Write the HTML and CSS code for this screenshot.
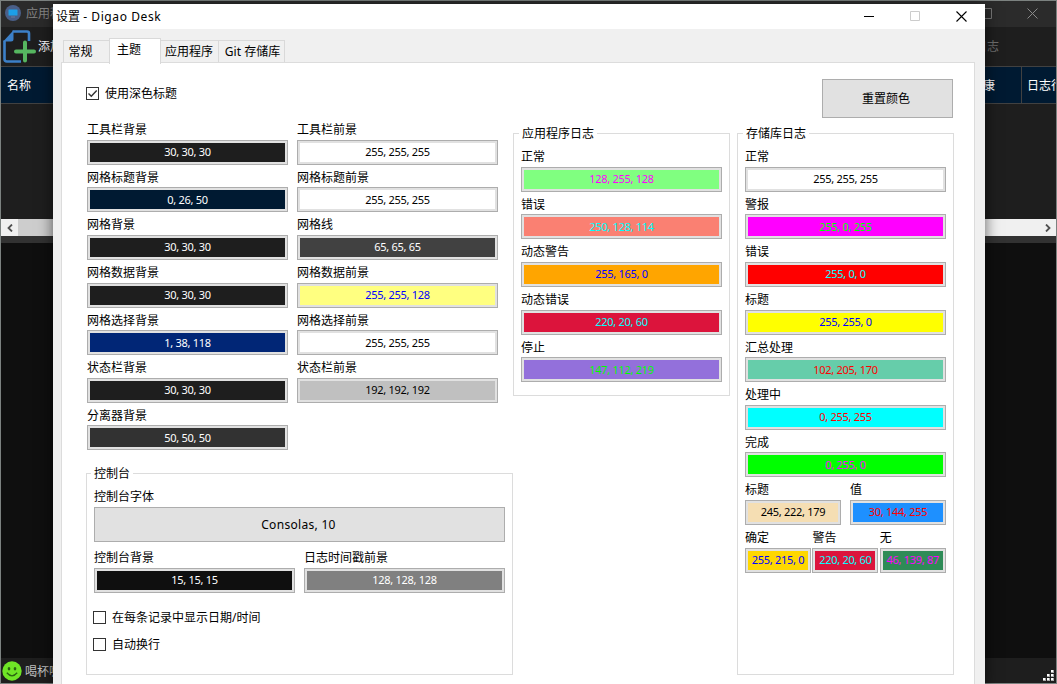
FILE: index.html
```html
<!DOCTYPE html>
<html lang="zh-CN">
<head>
    <meta charset="UTF-8">
    <title>设置 - Digao Desk</title>
    <link rel="stylesheet" href="styles.css">
</head>
<body>
    <div class="main-window">
        <div class="main-title">
            <svg class="app-icon" width="16" height="16" viewBox="0 0 16 16">
                <circle cx="8" cy="8" r="8" fill="#4a5f88"/>
                <rect x="3.5" y="4.5" width="9" height="6" rx=".5" fill="#1c9fe8"/>
                <path d="M6 12h4" stroke="#6a7f9f"/>
            </svg>
            <span>应用程序</span>
            <div class="main-controls">
                <svg width="11" height="11"><path d="M.5.5h10v10H.5z" fill="none" stroke="#777"/></svg>
                <svg width="11" height="11"><path d="M.5.5l10 10M10.500.5l-10 10" fill="none" stroke="#8a8a8a"/></svg>
            </div>
        </div>
        <div class="toolbar">
            <svg width="33" height="33" viewBox="0 0 33 33">
                <path d="M9.500 1.500H24a2 2 0 0 1 2 2V11M1.500 10.500V29a2.500 2.500 0 0 0 2.500 2.500h14" fill="none" stroke="#3c80c8" stroke-width="2.600"/>
                <path d="M.2 11.500L10.500.2V9q0 2.500-2.500 2.500z" fill="#3c80c8"/>
                <path d="M22 12.500v18M13 21.500h18" stroke="#56b660" stroke-width="4" stroke-linecap="round"/>
            </svg>
            <span class="tool-add">添加</span>
            <span class="tool-log">日志</span>
        </div>
        <div class="grid-header">
            <div class="cell cell-name">名称</div>
            <div class="cell cell-health">健康</div>
            <div class="cell cell-log">日志行</div>
        </div>
        <div class="grid-body"></div>
        <div class="scrollbar">
            <div class="arrow"><svg width="6" height="8"><path d="M5 .5L1.500 4L5 7.500" fill="none" stroke="#505050" stroke-width="1.800"/></svg></div>
            <div class="thumb"></div>
            <div class="arrow"><svg width="6" height="8"><path d="M1 .5L4.500 4L1 7.500" fill="none" stroke="#505050" stroke-width="1.800"/></svg></div>
        </div>
        <div class="splitter"></div>
        <div class="console"></div>
        <div class="statusbar">
            <svg width="20" height="20" viewBox="0 0 20 20">
                <circle cx="10" cy="10" r="9.700" fill="#6fe526"/>
                <ellipse cx="7" cy="7.800" rx="1.300" ry="1.700" fill="#2a6412"/>
                <ellipse cx="13" cy="7.800" rx="1.300" ry="1.700" fill="#2a6412"/>
                <path d="M4.800 11.800q5.200 6 10.400 0" fill="none" stroke="#2a6412" stroke-width="1.300"/>
            </svg>
            <span>喝杯咖啡</span>
            <svg class="grip" width="11" height="11">
                <path d="M8 0h3v3H8zM8 4h3v3H8zM4 4h3v3H4zM8 8h3v3H8zM4 8h3v3H4zM0 8h3v3H0z" fill="#a8a8a8"/>
                <path d="M8 0h2v2H8zM8 4h2v2H8zM4 4h2v2H4zM8 8h2v2H8zM4 8h2v2H4zM0 8h2v2H0z" fill="#fff"/>
            </svg>
        </div>
    </div>

    <div class="dialog">
        <div class="dialog-title">
            <span class="caption">设置 <span class="latin">- Digao Desk</span></span>
            <div class="dialog-controls">
                <svg width="11" height="11"><path d="M0 5.500h10" stroke="#000"/></svg>
                <svg width="11" height="11"><path d="M.5.5h9v9h-9z" fill="none" stroke="#ccc"/></svg>
                <svg width="11" height="11"><path d="M.5.5l10 10M10.500.5l-10 10" stroke="#000" stroke-width="1.100"/></svg>
            </div>
        </div>
        <div class="tabs">
            <div class="tab tab-general">常规</div>
            <div class="tab tab-theme active">主题</div>
            <div class="tab tab-apps">应用程序</div>
            <div class="tab tab-git">Git 存储库</div>
        </div>
        <div class="panel">
            <div class="left">
                <label class="check dark-title">
                    <span class="box"><svg width="11" height="11"><path d="M1.500 5.500L4.300 8.300L9.700 2.600" fill="none" stroke="#333" stroke-width="1.400"/></svg></span>
                    <span>使用深色标题</span>
                </label>
                <div class="fields two-cols">
                    <div class="field"><label>工具栏背景</label><button class="swatch toolbar-bg">30, 30, 30</button></div>
                    <div class="field"><label>工具栏前景</label><button class="swatch white">255, 255, 255</button></div>
                    <div class="field"><label>网格标题背景</label><button class="swatch header-bg">0, 26, 50</button></div>
                    <div class="field"><label>网格标题前景</label><button class="swatch white">255, 255, 255</button></div>
                    <div class="field"><label>网格背景</label><button class="swatch toolbar-bg">30, 30, 30</button></div>
                    <div class="field"><label>网格线</label><button class="swatch lines">65, 65, 65</button></div>
                    <div class="field"><label>网格数据背景</label><button class="swatch toolbar-bg">30, 30, 30</button></div>
                    <div class="field"><label>网格数据前景</label><button class="swatch data-fg">255, 255, 128</button></div>
                    <div class="field"><label>网格选择背景</label><button class="swatch select-bg">1, 38, 118</button></div>
                    <div class="field"><label>网格选择前景</label><button class="swatch white">255, 255, 255</button></div>
                    <div class="field"><label>状态栏背景</label><button class="swatch toolbar-bg">30, 30, 30</button></div>
                    <div class="field"><label>状态栏前景</label><button class="swatch silver">192, 192, 192</button></div>
                    <div class="field"><label>分离器背景</label><button class="swatch splitter-bg">50, 50, 50</button></div>
                </div>
                <fieldset class="console-group">
                    <legend>控制台</legend>
                    <div class="field font-field">
                        <label>控制台字体</label>
                        <button class="font-btn">Consolas, 10</button>
                    </div>
                    <div class="fields two-cols">
                        <div class="field"><label>控制台背景</label><button class="swatch console-bg">15, 15, 15</button></div>
                        <div class="field"><label>日志时间戳前景</label><button class="swatch gray">128, 128, 128</button></div>
                    </div>
                    <div class="checks">
                        <label class="check"><span class="box"></span>在每条记录中显示日期/时间</label>
                        <label class="check"><span class="box"></span>自动换行</label>
                    </div>
                </fieldset>
            </div>
            <div class="right">
                <button class="reset-btn">重置颜色</button>
                <div class="groups">
                    <fieldset class="app-group">
                        <legend>应用程序日志</legend>
                        <div class="field"><label>正常</label><button class="swatch app-normal">128, 255, 128</button></div>
                        <div class="field"><label>错误</label><button class="swatch salmon">250, 128, 114</button></div>
                        <div class="field"><label>动态警告</label><button class="swatch orange">255, 165, 0</button></div>
                        <div class="field"><label>动态错误</label><button class="swatch crimson">220, 20, 60</button></div>
                        <div class="field"><label>停止</label><button class="swatch purple">147, 112, 219</button></div>
                    </fieldset>
                    <fieldset class="repo-group">
                        <legend>存储库日志</legend>
                        <div class="field"><label>正常</label><button class="swatch white">255, 255, 255</button></div>
                        <div class="field"><label>警报</label><button class="swatch magenta">255, 0, 255</button></div>
                        <div class="field"><label>错误</label><button class="swatch red">255, 0, 0</button></div>
                        <div class="field"><label>标题</label><button class="swatch yellow">255, 255, 0</button></div>
                        <div class="field"><label>汇总处理</label><button class="swatch aqua">102, 205, 170</button></div>
                        <div class="field"><label>处理中</label><button class="swatch cyan">0, 255, 255</button></div>
                        <div class="field"><label>完成</label><button class="swatch lime">0, 255, 0</button></div>
                        <div class="halves">
                            <div class="field"><label>标题</label><button class="swatch wheat">245, 222, 179</button></div>
                            <div class="field"><label>值</label><button class="swatch blue">30, 144, 255</button></div>
                        </div>
                        <div class="thirds">
                            <div class="field"><label>确定</label><button class="swatch gold">255, 215, 0</button></div>
                            <div class="field"><label>警告</label><button class="swatch crimson">220, 20, 60</button></div>
                            <div class="field"><label>无</label><button class="swatch green">46, 139, 87</button></div>
                        </div>
                    </fieldset>
                </div>
            </div>
        </div>
    </div>
</body>
</html>
```

FILE: styles.css
```css
* {
    box-sizing: border-box;
}
body {
    margin: 0;
    height: 684px;
    overflow: hidden;
    font-family: "Noto Sans", "Noto Sans CJK SC", sans-serif;
    font-size: 12px;
    color: #000;
    white-space: nowrap;
}
svg {
    display: block;
    flex: none;
}
button {
    font-family: inherit;
    color: inherit;
    padding: 0;
    margin: 0;
    border-radius: 0;
}

/* main window */
.main-window {
    display: flex;
    flex-direction: column;
    height: 684px;
    border: 1px solid #7c8280;
    background: #1e1e1e;
    color: #fff;
    overflow: hidden;
}
.main-title {
    display: flex;
    align-items: center;
    height: 26px;
    padding: 0 18px 2px 4px;
    gap: 5px;
    background: #2b2b2b;
    color: #858585;
}
.main-controls {
    display: flex;
    gap: 35px;
    margin-left: auto;
}
.toolbar {
    display: flex;
    align-items: center;
    height: 39px;
    padding: 0 57px 0 2px;
}
.toolbar span {
    padding-bottom: 2px;
}
.tool-add {
    margin-left: 2px;
}
.tool-log {
    margin-left: auto;
    color: #6d6d6d;
}
.grid-header {
    display: flex;
    height: 38px;
    background: #001a32;
    border-top: 1px solid #414141;
    border-bottom: 1px solid #414141;
}
.cell {
    padding-left: 5px;
    line-height: 37px;
    border-right: 1px solid #414141;
    overflow: hidden;
}
.cell-name {
    flex: 1;
    padding-left: 6px;
}
.cell-health {
    width: 56px;
}
.cell-log {
    width: 34px;
    border-right: none;
}
.grid-body {
    height: 115px;
}
.scrollbar {
    display: flex;
    height: 17px;
    background: #f0f0f0;
}
.arrow {
    display: flex;
    align-items: center;
    justify-content: center;
    width: 17px;
}
.thumb {
    width: 880px;
    margin-right: auto;
    background: #cdcdcd;
}
.splitter {
    height: 7px;
    background: #323232;
}
.console {
    flex: 1;
    background: #0f0f0f;
}
.statusbar {
    display: flex;
    align-items: center;
    height: 25px;
    padding: 0 2px 0 1px;
    gap: 3px;
    color: #c0c0c0;
}
.grip {
    margin-left: auto;
    align-self: flex-end;
    margin-bottom: 2px;
}

/* settings dialog */
.dialog {
    position: absolute;
    left: 53px;
    top: 4px;
    width: 932px;
    height: 680px;
    display: flex;
    flex-direction: column;
    background: #f0f0f0;
    box-shadow: 0 3px 14px rgba(0, 0, 0, 0.6);
}
.dialog-title {
    display: flex;
    align-items: center;
    justify-content: space-between;
    height: 25px;
    padding: 0 18px 0 3px;
    background: #fff;
}
.caption {
    padding-bottom: 2px;
}
.latin {
    letter-spacing: 0.6px;
}
.dialog-controls {
    display: flex;
    gap: 35px;
}
.tabs {
    display: flex;
    align-items: flex-end;
    height: 34px;
    padding-left: 10px;
}
.tab {
    height: 23px;
    line-height: 21px;
    text-align: center;
    border: 1px solid #d9d9d9;
    border-left: none;
    border-bottom: none;
}
.tab.active {
    position: relative;
    height: 26px;
    margin-bottom: -1px;
    padding-right: 12px;
    border-left: 1px solid #d9d9d9;
    background: #fff;
}
.tab-general {
    width: 46px;
    padding-right: 12px;
    border-left: 1px solid #d9d9d9;
    border-right: none;
}
.tab-theme {
    width: 52px;
}
.tab-apps {
    width: 58px;
    padding-right: 1px;
}
.tab-git {
    width: 66px;
    padding-left: 2px;
}
.panel {
    display: flex;
    flex: 1;
    margin: -1px 10px 0 8px;
    padding: 16px 0 0 24px;
    border: 1px solid #dcdcdc;
    border-bottom: none;
    background: #fff;
}
.left {
    width: 427px;
}
.right {
    width: 440px;
}
.check {
    display: flex;
    align-items: center;
    gap: 6px;
    height: 27px;
}
.dark-title {
    height: 29px;
    margin-bottom: 9.2px;
}
.dark-title span:last-child {
    padding-bottom: 1px;
}
.box {
    display: block;
    width: 13px;
    height: 13px;
    border: 1px solid #333;
    background: #fff;
}
.two-cols {
    display: grid;
    grid-template-columns: 201px 201px;
    column-gap: 9px;
}
.left > .two-cols {
    padding-left: 1px;
}
.field label {
    display: block;
    height: 22.6px;
    line-height: 26px;
}
.swatch {
    display: block;
    width: 100%;
    height: 25px;
    border: 1px solid #adadad;
    box-shadow: inset 0 0 0 2px #e1e1e1;
    font-size: 11px;
    line-height: 22px;
    letter-spacing: -0.3px;
}
fieldset {
    margin: 0;
    min-width: 0;
    padding: 0.2px 7px 0;
    border: 1px solid #dcdcdc;
}
legend {
    height: 21px;
    line-height: 21px;
    margin-left: -2px;
    padding: 0 3px;
}
.console-group {
    height: 212px;
    margin-top: 12.6px;
}
.console-group legend {
    margin-left: -3px;
}
.font-field {
    margin-bottom: 3.4px;
}
.font-btn {
    display: block;
    width: 411px;
    height: 35px;
    padding-right: 2px;
    border: 1px solid #adadad;
    background: #e1e1e1;
    font-size: 12px;
    letter-spacing: 0.3px;
}
.checks {
    margin: 11px 0 0 -1px;
}
.reset-btn {
    display: block;
    width: 131px;
    height: 39px;
    margin: 0 0 5px auto;
    padding: 0 3px 2px 0;
    border: 1px solid #adadad;
    background: #e1e1e1;
    font-size: 12px;
}
.groups {
    display: flex;
    align-items: flex-start;
    gap: 7px;
}
.app-group,
.repo-group {
    flex: none;
    width: 217px;
}
.app-group {
    height: 273px;
}
.repo-group {
    height: 552px;
}
.halves {
    display: grid;
    grid-template-columns: 96px 96px;
    gap: 9px;
}
.thirds {
    display: grid;
    grid-template-columns: 66px 66px 66px;
    column-gap: 1.4px;
}

/* swatch colours */
.toolbar-bg { background: rgb(30, 30, 30); color: #fff; }
.header-bg { background: rgb(0, 26, 50); color: #fff; }
.lines { background: rgb(65, 65, 65); color: #fff; }
.select-bg { background: rgb(1, 38, 118); color: #fff; }
.splitter-bg { background: rgb(50, 50, 50); color: #fff; }
.console-bg { background: rgb(15, 15, 15); color: #fff; }
.gray { background: rgb(128, 128, 128); color: #fff; }
.silver { background: rgb(192, 192, 192); color: #000; }
.white { background: #fff; color: #000; }
.data-fg { background: rgb(255, 255, 128); color: #00f; }
.app-normal { background: rgb(128, 255, 128); color: #f0f; }
.salmon { background: rgb(250, 128, 114); color: #0ff; }
.orange { background: rgb(255, 165, 0); color: #00f; }
.crimson { background: rgb(220, 20, 60); color: #0ff; }
.purple { background: rgb(147, 112, 219); color: #0f0; }
.magenta { background: rgb(255, 0, 255); color: #0f0; }
.red { background: rgb(255, 0, 0); color: #0ff; }
.yellow { background: rgb(255, 255, 0); color: #00f; }
.aqua { background: rgb(102, 205, 170); color: #f00; }
.cyan { background: rgb(0, 255, 255); color: #f00; }
.lime { background: rgb(0, 255, 0); color: #f0f; }
.wheat { background: rgb(245, 222, 179); color: #000; }
.blue { background: rgb(30, 144, 255); color: #f00; }
.gold { background: rgb(255, 215, 0); color: #00f; }
.green { background: rgb(46, 139, 87); color: #f0f; }
```
